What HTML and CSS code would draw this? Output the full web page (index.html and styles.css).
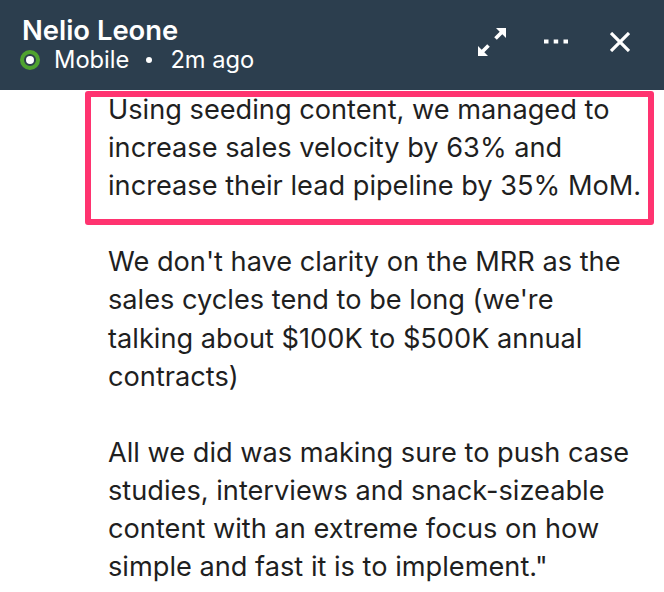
FILE: index.html
```html
<!DOCTYPE html>
<html lang="en">
<head>
<meta charset="utf-8">
<title>Nelio Leone</title>
<link rel="stylesheet" href="styles.css">
</head>
<body>
<header class="bar">
  <div class="who">
    <div class="name">Nelio Leone</div>
    <div class="status">
      <span class="dot"></span>
      <span class="device">Mobile</span>
      <span class="sep"></span>
      <span>2m ago</span>
    </div>
  </div>
  <div class="actions">
    <svg class="ico-expand" width="28" height="28" viewBox="0 0 28 28" aria-hidden="true">
      <path d="M18 0H28V10L24.300 6.300 18.800 11.800 16.200 9.200 21.700 3.700ZM10 28H0V18L3.700 21.700 9.200 16.200 11.800 18.800 6.300 24.300Z" fill="#fff"/>
    </svg>
    <svg class="ico-more" width="24" height="5" viewBox="0 0 24 5" aria-hidden="true">
      <path d="M0 .5h4.500v4H0zM9.700 .5h4.500v4H9.700zM19.500 .5H24v4h-4.500z" fill="#fff"/>
    </svg>
    <svg class="ico-close" width="20" height="20" viewBox="0 0 20 20" aria-hidden="true">
      <path d="M1 1l18 18M19 1L1 19" stroke="#fff" stroke-width="3.200" fill="none"/>
    </svg>
  </div>
</header>
<main class="msg">
  <p class="hl">Using seeding content, we managed to<br>increase sales velocity by 63% and<br>increase their lead pipeline by 35% MoM.</p>
  <p>We don't have clarity on the MRR as the<br>sales cycles tend to be long (we're<br>talking about $100K to $500K annual<br>contracts)</p>
  <p>All we did was making sure to push case<br>studies, interviews and snack-sizeable<br>content with an extreme focus on how<br>simple and fast it is to implement."</p>
</main>
</body>
</html>
```
FILE: styles.css
```css
*, *::before, *::after { box-sizing: border-box; }
html, body { margin: 0; padding: 0; }
body {
  width: 664px;
  height: 592px;
  overflow: hidden;
  background: #fff;
  font-family: Inter, "Liberation Sans", sans-serif;
  color: #1f1f1f;
}
.bar {
  height: 90px;
  background: #2c3e4e;
  color: #fff;
  display: flex;
  justify-content: space-between;
  padding: 15px 34px 0 20px;
}
.name {
  font-size: 27.4px;
  line-height: 30px;
  font-weight: 600;
  margin-left: 2px;
}
.status {
  display: flex;
  align-items: center;
  font-size: 23.7px;
  line-height: 30px;
}
.dot {
  width: 20px;
  height: 20px;
  border-radius: 50%;
  border: 4px solid #4fa32f;
  background: #2c3e4e;
  position: relative;
  margin-right: 14px;
}
.dot::after {
  content: "";
  position: absolute;
  inset: 2px;
  border-radius: 50%;
  background: #fff;
}
.sep {
  width: 6px;
  height: 6px;
  border-radius: 50%;
  background: #fff;
  margin: 0 18px 0 17px;
}
.actions {
  display: flex;
  align-items: flex-start;
}
.ico-expand { margin: 13px 38px 0 0; }
.ico-more { margin: 24px 42px 0 0; }
.ico-close { margin: 17px 0 0 0; }
.msg {
  font-size: 27.2px;
  line-height: 38.1px;
  padding: 1px 0 0 108px;
}
.msg p { margin: 0; }
.msg p + p { margin-top: 38.1px; }
.hl { position: relative; }
.hl::before {
  content: "";
  position: absolute;
  top: 0;
  left: -23px;
  width: 569px;
  height: 134px;
  border: 6px solid #ff3370;
  border-radius: 3px;
}
```
